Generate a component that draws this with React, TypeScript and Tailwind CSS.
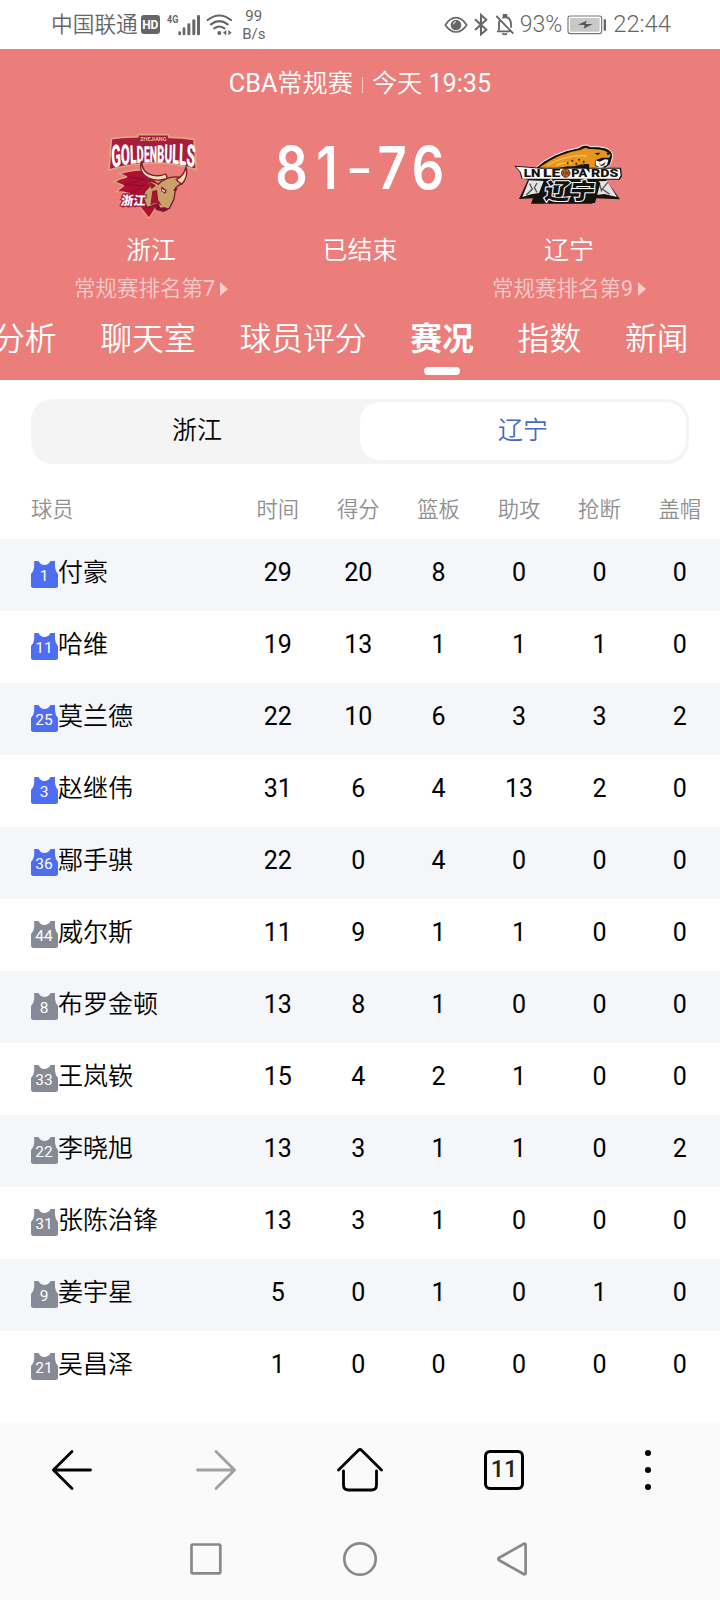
const columns = ["时间", "得分", "篮板", "助攻", "抢断", "盖帽"];

const players = [
    { no: 1, name: "付豪", starter: true, stats: [29, 20, 8, 0, 0, 0] },
    { no: 11, name: "哈维", starter: true, stats: [19, 13, 1, 1, 1, 0] },
    { no: 25, name: "莫兰德", starter: true, stats: [22, 10, 6, 3, 3, 2] },
    { no: 3, name: "赵继伟", starter: true, stats: [31, 6, 4, 13, 2, 0] },
    { no: 36, name: "鄢手骐", starter: true, stats: [22, 0, 4, 0, 0, 0] },
    { no: 44, name: "威尔斯", starter: false, stats: [11, 9, 1, 1, 0, 0] },
    { no: 8, name: "布罗金顿", starter: false, stats: [13, 8, 1, 0, 0, 0] },
    { no: 33, name: "王岚嵚", starter: false, stats: [15, 4, 2, 1, 0, 0] },
    { no: 22, name: "李晓旭", starter: false, stats: [13, 3, 1, 1, 0, 2] },
    { no: 31, name: "张陈治锋", starter: false, stats: [13, 3, 1, 0, 0, 0] },
    { no: 9, name: "姜宇星", starter: false, stats: [5, 0, 1, 0, 1, 0] },
    { no: 21, name: "吴昌泽", starter: false, stats: [1, 0, 0, 0, 0, 0] },
];

const tabs = ["分析", "聊天室", "球员评分", "赛况", "指数", "新闻"];

function StatusBar() {
    return (
        <div className="flex h-[49px] items-center pl-[51px] pr-[49px] text-[#666]">
            <span className="text-[21.7px] leading-none font-[350]">中国联通</span>
            <span className="ml-[3px] flex h-[19px] w-[19px] items-center justify-center rounded-[3px] bg-[#666] pt-px text-[12px] leading-none font-bold text-white">
                HD
            </span>
            {/* 4G + signal */}
            <svg className="ml-[6px]" width="36" height="24" viewBox="380 36 108 72" fill="#666">
                <text x="383" y="67" fontSize="33" fontWeight="700" textLength="34" lengthAdjust="spacingAndGlyphs">4G</text>
                <rect x="417" y="91" width="8" height="12" rx="4" />
                <rect x="430" y="79" width="8" height="24" rx="4" />
                <rect x="444" y="67" width="9" height="36" rx="4" />
                <rect x="459" y="55" width="9" height="48" rx="4" />
                <rect x="473" y="42" width="9" height="61" rx="4" />
            </svg>
            <svg className="ml-[4px]" width="26" height="24" viewBox="497 36 78 72" fill="none" stroke="#666" strokeWidth="6.5" strokeLinecap="round">
                <path d="M502 57Q537 30 572 57M512 70Q537 51 562 70M522 82Q537 71 552 82" />
                <circle cx="537" cy="96" r="6" fill="#666" stroke="none" />
                <path d="M548 95l10-8v16zM574 95l-10-8v16z" fill="#666" stroke="none" />
            </svg>
            <div className="ml-[10px] w-6 text-center text-[15px] leading-[18px]">
                <p>99</p>
                <p>B/s</p>
            </div>
            <svg className="ml-auto" width="24" height="20" viewBox="42 46 72 60" fill="none" stroke="#666" strokeWidth="5">
                <path d="M46 76Q60 54 78 54T110 76Q96 97 78 97T46 76Z" />
                <circle cx="78" cy="76" r="16" fill="#666" stroke="none" />
                <path d="M70 74q1-8 8-8" stroke="#fff" strokeWidth="3" />
            </svg>
            <svg className="ml-[6px]" width="14" height="24" viewBox="132 40 42 72" fill="none" stroke="#666" strokeWidth="6">
                <path d="M135 59l34 31-16 14V46l16 14-34 31" />
            </svg>
            <svg className="ml-[7px]" width="20" height="24" viewBox="196 40 60 72" fill="none" stroke="#666" strokeWidth="5.5">
                <path d="M200 49l51 53M208 92V73q0-7 3-12M218 55q5-3 8-3 18 1 18 22v10M202 95h38M222 52v-6h8v6" />
                <path d="M218 101q7 6 14 0" />
            </svg>
            <span className="ml-[5px] text-[23px] leading-none font-[350]">93%</span>
            <svg className="ml-[5px]" width="40" height="20" viewBox="413 44 120 60">
                <rect x="416" y="47" width="101" height="53" rx="7" fill="#fff" stroke="#777" strokeWidth="3.5" />
                <rect x="422" y="53" width="89" height="41" rx="3" fill="#c8c8c8" />
                <path d="M445 73l27-12-3 10h21l-27 14 3-11z" fill="#555" />
                <rect x="523" y="57" width="7" height="34" rx="2" fill="#666" />
            </svg>
            <span className="ml-[6px] text-[23.8px] leading-none font-[350]">22:44</span>
        </div>
    );
}

function BullsLogo() {
    return (
        <svg className="relative left-[2px] top-[2px]" width="92" height="88" viewBox="140 66 276 264">
            <defs>
                <path id="arch" d="M335 171Q600 137 884 170" />
            </defs>
            {/* banner */}
            <path
                d="M153 83Q190 77 232 78V71H325V79Q365 79 401 85L408 176Q330 152 275 156Q200 160 146 177Z"
                fill="#a81c3e"
                stroke="#dca681"
                strokeWidth="5"
                strokeLinejoin="round"
            />
            <text x="240" y="91" fontSize="17" fontWeight="700" fill="#e9b995" textLength="78" lengthAdjust="spacingAndGlyphs">ZHEJIANG</text>
            <text transform="scale(.46 1)" fontWeight="900" fill="#fff">
                <textPath href="#arch">
                    <tspan fontSize="93">G</tspan>
                    <tspan fontSize="85">O</tspan>
                    <tspan fontSize="78">L</tspan>
                    <tspan fontSize="72">D</tspan>
                    <tspan fontSize="68">EN</tspan>
                    <tspan fontSize="72">B</tspan>
                    <tspan fontSize="77">U</tspan>
                    <tspan fontSize="82">L</tspan>
                    <tspan fontSize="88">L</tspan>
                    <tspan fontSize="93">S</tspan>
                </textPath>
            </text>
            {/* mane */}
            <path
                d="M256 178q-36-4-78 10l22 10q-22 4-38 14l28 12-22 18q24 0 40 6l-12 28 40 8 30 38 22-34 16-60z"
                fill="#b10e31"
                stroke="#dca681"
                strokeWidth="4"
            />
            <path d="M200 198l54 6-62 18 56 2-38 24" fill="none" stroke="#8a1230" strokeWidth="4" />
            {/* face */}
            <path
                d="M258 210q22-1 36 10 24-24 56-22l18 2-8 20-14 10-5 34-14 28-22 5-20-17-14 6-12 3-12-34 8-16 12-12z"
                fill="#c9a169"
                stroke="#7c1b30"
                strokeWidth="4"
            />
            <path d="M262 213q16 1 24 12l-12 9zM276 240l14-4 4 32 10 14-20-6-14 6z" fill="#a31432" />
            {/* horns */}
            <path
                d="M244 150q0 36 34 43 20 4 37-4 8 8 2 15-28 8-52-3-32-16-21-51zM377 168q8 30-13 52l-16-14q22-10 29-38z"
                fill="#f6dcb2"
                stroke="#7c1b30"
                strokeWidth="4"
            />
            <path d="M303 226l16 12-4 10-12-7zM338 236l14-6-5 12zM284 281l10-5 6 14 14-2 10 8-14 7-24-7z" fill="#7c1430" />
            <path d="M306 234l9 6-3 3-6-3z" fill="#fff" />
            <text x="220" y="283" fontSize="37" fontWeight="900" fill="#fff" stroke="#a3143c" strokeWidth="7" paintOrder="stroke" transform="skewX(-8)">浙江</text>
        </svg>
    );
}

function LeopardsLogo() {
    return (
        <svg className="relative -top-px right-px" width="110" height="62" viewBox="102 98 330 186">
            <path d="M148 206l-28 60 42-2-6 16h184l8-16 75 3-44-61z" fill="#15110f" />
            <path d="M150 210l-20 50 26-8 24-4 14-36zM384 212l30 48-38-9-30 4-2-42z" fill="#e4e4e4" />
            <path d="M152 220l8 16-18 18M174 218l-8 14 8 14M386 216l-16 20 22 16M362 222l6 22" fill="none" stroke="#555" strokeWidth="4" />
            {/* leopard */}
            <path
                d="M168 174q52-48 132-62 18-14 34-3 26-2 46 4 22 8 21 26l-7 24-15 11-26-4-8 18-190-3z"
                fill="#15110f"
                stroke="#fff"
                strokeWidth="3"
            />
            <path
                d="M180 172q56-43 126-54 13-9 23-2 30-1 48 5 14 6 18 13l-4 8-22 0-20 8-2 14 10 8-24 4-26-14q-20 8-40 6l-36 6z"
                fill="#e6951f"
            />
            <path d="M205 165q60-34 120-28M232 165q24-10 48-6" fill="none" stroke="#f6bf58" strokeWidth="4" />
            <path d="M350 150l12 4 16-7 10 1-4 16-18 8-16-8z" fill="#fff" />
            <path d="M358 156l8 8 14-9-4 9-10 4z" fill="#5a1d14" />
            <path d="M346 128l18-1-7 8zM382 126l12 4-8 5z" fill="#15110f" />
            <g fill="#3c210b">
                <circle cx="266" cy="158" r="3" />
                <circle cx="280" cy="151" r="3" />
                <circle cx="292" cy="160" r="3" />
                <circle cx="300" cy="148" r="3" />
                <circle cx="314" cy="154" r="3" />
            </g>
            {/* name banner */}
            <path d="M106 166l80 6h240l3 25-7 11H150l-22-3-6-20z" fill="#15110f" />
            <path d="M111 169l75 6h236l3 20-6 10H131l-6-20z" fill="#fff" />
            <g fontSize="34" fontWeight="900" fill="#15110f">
                <text x="134" y="201" textLength="50" lengthAdjust="spacingAndGlyphs">LN</text>
                <text x="192" y="201" textLength="52" lengthAdjust="spacingAndGlyphs">LE</text>
                <text x="277" y="201" textLength="48" lengthAdjust="spacingAndGlyphs">PA</text>
                <text x="336" y="201" textLength="82" lengthAdjust="spacingAndGlyphs">RDS</text>
            </g>
            <path d="M310 160l20 2 2 26-8-10z" fill="#15110f" />
            <circle cx="260" cy="188" r="13" fill="#c46a33" stroke="#15110f" strokeWidth="2" />
            <path d="M247 188h26M260 175v26M251 179q7 9 0 18M269 179q-7 9 0 18" fill="none" stroke="#3c210b" strokeWidth="1.5" />
            <path d="M200 206h152l12 12-8 30-8 30H162l6-18 22-4z" fill="#15110f" />
            <text
                transform="translate(194 266) skewX(-8)"
                fontSize="66"
                fontWeight="900"
                fill="#15110f"
                stroke="#fff"
                strokeWidth="6"
                paintOrder="stroke"
                textLength="152"
                lengthAdjust="spacingAndGlyphs"
            >
                辽宁
            </text>
        </svg>
    );
}

function Team({ name, rank, logo }: { name: string; rank: number; logo: React.ReactNode }) {
    return (
        <div className="flex w-[302px] shrink-0 flex-col items-center">
            <div className="flex h-[117px] shrink-0 items-center justify-center">{logo}</div>
            <p className="text-[25px] leading-[36px] font-[350]">{name}</p>
            <div className="mt-[2px] flex items-center gap-[5px] text-white/60">
                <p className="text-[21.5px] leading-[36px] font-[350]">
                    常规赛排名第<span className="font-normal">{rank}</span>
                </p>
                <svg width="8" height="14" viewBox="0 0 8 14" fill="currentColor">
                    <path d="M0 0l8 7-8 7z" />
                </svg>
            </div>
        </div>
    );
}

function MatchHeader() {
    return (
        <header className="h-[331px] overflow-hidden border-t border-[#d08a8c] bg-[#eb7e7b] text-white">
            <div className="flex h-[66px] items-center justify-center pt-[2px] text-[25.2px] font-[350]">
                <p><span className="font-normal">CBA</span>常规赛</p>
                <span className="mx-[9px] mt-[2px] h-4 w-px bg-white/60" />
                <p>今天 <span className="font-normal">19:35</span></p>
            </div>
            <div className="flex h-[191px]">
                <Team name="浙江" rank={7} logo={<BullsLogo />} />
                <div className="flex w-[116px] shrink-0 flex-col items-center">
                    <div className="flex h-[117px] shrink-0 items-center pb-[13px] font-['Inter'] text-[59px] font-semibold">
                        <span className="w-[39px] scale-x-[.86] text-center">8</span>
                        <span className="w-[32px] scale-x-[.86] text-center">1</span>
                        <span className="w-[33px] scale-y-75 text-center">-</span>
                        <span className="flex w-[32px] scale-x-[.86] justify-center">7</span>
                        <span className="w-[40px] scale-x-[.86] text-center">6</span>
                    </div>
                    <p className="text-[25px] leading-[36px] font-[350]">已结束</p>
                </div>
                <Team name="辽宁" rank={9} logo={<LeopardsLogo />} />
            </div>
            <nav className="-ml-[7px] mt-[8px] flex gap-[43.7px] whitespace-nowrap text-[31.8px] leading-[48px] font-[350]">
                {tabs.map((tab) => (
                    <div key={tab} className="flex shrink-0 flex-col items-center">
                        <span className={tab === "赛况" ? "font-bold" : ""}>{tab}</span>
                        {tab === "赛况" && <span className="mt-[4px] h-2 w-9 rounded bg-white" />}
                    </div>
                ))}
            </nav>
        </header>
    );
}

function Jersey({ no, starter }: { no: number; starter: boolean }) {
    return (
        <svg className="-mt-[2px] shrink-0" width="27" height="27" viewBox="0 0 27 27">
            <path
                d="M3.2 0H7.5Q9.5 4 13.5 4T19.5 0H24V6Q24.3 10 27 13V24.5Q27 27 24.5 27H2.5Q0 27 0 24.5V13Q2.9 10 3.2 6Z"
                fill={starter ? "#4f6df0" : "#868a96"}
            />
            <text x="13" y="20.2" fontSize="15.5" fill="#fff" textAnchor="middle">{no}</text>
        </svg>
    );
}

function StatsTable() {
    return (
        <div>
            <div className="flex h-[75px] items-center pt-[16px] text-[21.3px] font-[350] text-[#8f8f8f]">
                <span className="w-[237.6px] pl-[31px]">球员</span>
                {columns.map((column) => (
                    <span key={column} className="flex-1 text-center">{column}</span>
                ))}
            </div>
            {players.map((player) => (
                <div key={player.no} className="flex h-[72px] items-center text-[25px] text-black odd:bg-white even:bg-[#f4f6fa]">
                    <div className="flex w-[237.6px] items-center pl-[31px]">
                        <Jersey no={player.no} starter={player.starter} />
                        <span className="pb-1 font-[350]">{player.name}</span>
                    </div>
                    {player.stats.map((value, i) => (
                        <span key={i} className="flex-1 pb-1 text-center">{value}</span>
                    ))}
                </div>
            ))}
        </div>
    );
}

function BrowserBar() {
    return (
        <div className="flex h-24 items-center">
            <div className="flex flex-1 justify-center">
                <svg width="44" height="44" viewBox="0 0 44 44" fill="none" stroke="#000" strokeWidth="2.8" strokeLinecap="round" strokeLinejoin="round">
                    <path d="M22 3.4L3.4 22 22 40.6M3.4 22H40.5" />
                </svg>
            </div>
            <div className="flex flex-1 justify-center">
                <svg width="44" height="44" viewBox="0 0 44 44" fill="none" stroke="#a0a0a0" strokeWidth="2.8" strokeLinecap="round" strokeLinejoin="round">
                    <path d="M22 3.4L40.6 22 22 40.6M40.6 22H3.5" />
                </svg>
            </div>
            <div className="flex flex-1 justify-center">
                <svg width="48" height="44" viewBox="0 0 48 44" fill="none" stroke="#000" strokeWidth="2.8" strokeLinecap="round" strokeLinejoin="round">
                    <path d="M2.5 22L22.2 2.4Q24 .7 25.8 2.4L45.5 22M7.5 23V37Q7.5 42 12.5 42H35.5Q40.5 42 40.5 37V23" />
                </svg>
            </div>
            <div className="flex flex-1 justify-center">
                <div className="flex h-10 w-10 items-center justify-center rounded-md border-3 border-black text-[23.5px] leading-none font-medium text-[#222]">
                    11
                </div>
            </div>
            <div className="flex flex-1 flex-col items-center gap-[11px]">
                <span className="h-[6px] w-[6px] rounded-full bg-black" />
                <span className="h-[6px] w-[6px] rounded-full bg-black" />
                <span className="h-[6px] w-[6px] rounded-full bg-black" />
            </div>
        </div>
    );
}

function SystemBar() {
    return (
        <div className="flex h-[82px] items-center justify-center gap-[118px]">
            <svg width="36" height="36" viewBox="0 0 36 36" fill="none" stroke="#898989" strokeWidth="2.7">
                <rect x="3.5" y="3.5" width="28.8" height="28.8" rx="1.2" />
            </svg>
            <svg width="36" height="36" viewBox="0 0 36 36" fill="none" stroke="#898989" strokeWidth="2.7">
                <circle cx="18" cy="18" r="15.7" />
            </svg>
            <svg width="36" height="36" viewBox="0 0 36 36" fill="none" stroke="#898989" strokeWidth="2.7" strokeLinejoin="round">
                <path d="M3.2 16.7L28 2.8Q29.6 2.3 29.6 3.8V32.2Q29.6 33.7 28 33.2L3.2 19.3Q1.4 18 3.2 16.7Z" />
            </svg>
        </div>
    );
}

export default function App() {
    return (
        <div className="flex h-[1600px] w-[720px] flex-col overflow-hidden bg-white font-['Roboto','Noto_Sans_CJK_SC',sans-serif]">
            <StatusBar />
            <MatchHeader />
            <main className="flex-1">
                <div className="mx-[31px] mt-[19px] flex h-[65px] items-start rounded-[22px] bg-[#f4f4f4] p-[3px] text-[25px] font-[350]">
                    <button className="h-[58px] flex-1 text-black">浙江</button>
                    <button className="h-[58px] flex-1 rounded-[20px] bg-white text-[#4a66c4]">辽宁</button>
                </div>
                <StatsTable />
            </main>
            <footer className="bg-[#fafafa]">
                <BrowserBar />
                <SystemBar />
            </footer>
        </div>
    );
}
